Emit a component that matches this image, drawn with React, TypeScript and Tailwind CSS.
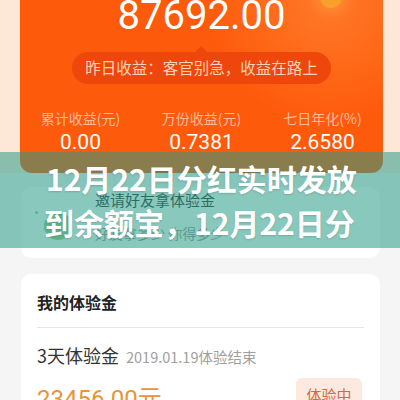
import React from "react";

const cjk = { fontFamily: '"Noto Sans CJK SC", "Noto Sans", sans-serif' };
const num = { fontFamily: 'Roboto, "Noto Sans", sans-serif' };

export default function App() {
  return (
    <div
      className="relative w-[400px] h-[400px] overflow-hidden bg-[#f5f5f5]"
      style={cjk}
    >
      {/* header */}
      <div className="bg-[#fde8d7]">
        <div className="relative ml-[20px] w-[363px] h-[173px] rounded-b-[12px] overflow-hidden bg-[#fe5a0b] bg-[radial-gradient(circle_at_85%_0%,#ff7a2a_0%,#fe5a0b_35%)]">
          <div className="absolute left-[300px] top-[-14px] w-[22px] h-[22px] rounded-full bg-[#f7a12a] shadow-[0_0_12px_6px_rgba(255,150,60,0.6)]" />
          <div
            className="mt-[-4px] text-center text-white text-[40px] leading-[40px]"
            style={num}
          >
            87692.00
          </div>
          <div className="flex justify-center mt-[16px]">
            <div className="relative h-[32px] px-[13px] rounded-full bg-[#ef460b] flex items-center text-[15.5px] text-[#fdd2bb] whitespace-nowrap">
              <div className="absolute left-1/2 -translate-x-1/2 top-[-6px] w-0 h-0 border-l-[6px] border-r-[6px] border-b-[6px] border-l-transparent border-r-transparent border-b-[#ef460b]" />
              昨日收益：客官别急，收益在路上
            </div>
          </div>
          <div className="grid grid-cols-3 mt-[24px]">
            {[
              ["累计收益(元)", "0.00"],
              ["万份收益(元)", "0.7381"],
              ["七日年化(%)", "2.6580"],
            ].map(([l, v]) => (
              <div key={l} className="flex flex-col items-center">
                <div className="text-[14px] leading-[20px] text-[#fcbc9c]">{l}</div>
                <div
                  className="mt-[2px] text-[21px] leading-[24px] text-white"
                  style={num}
                >
                  {v}
                </div>
              </div>
            ))}
          </div>
        </div>
      </div>

      {/* invite card */}
      <div className="ml-[21px] w-[359px] h-[71px] mt-[14px] rounded-[10px] bg-white relative flex items-start">
        <div className="absolute left-[14px] top-[24px] w-[3px] h-[3px] rounded-full bg-[#9ccc82]" />
        <div className="ml-[23px] mt-[25px] w-[28px] h-[28px] rounded-full bg-[#a3cf85]" />
        <div className="ml-[23px] pt-[3px] flex flex-col">
          <div className="text-[15px] leading-[20px] text-[#333]">邀请好友拿体验金</div>
          <div className="mt-[13px] text-[14px] leading-[20px] text-[#999]">好友拿多少 你得多少</div>
        </div>
      </div>

      {/* experience card */}
      <div className="ml-[21px] w-[359px] mt-[16px] rounded-[10px] bg-white px-[16px] pt-[17px] pb-[20px]">
        <div className="text-[16px] leading-[22px] font-bold text-[#222]">我的体验金</div>
        <div className="mt-[14px] h-px bg-[#e6e6e6]" />
        <div className="mt-[14px] flex items-baseline gap-[7px] whitespace-nowrap">
          <span className="text-[18px] leading-[26px] text-[#333]">3天体验金</span>
          <span className="text-[14.5px] text-[#a0a0a0]">2019.01.19体验结束</span>
        </div>
        <div className="flex items-start justify-between">
          <div
            className="mt-[13px] text-[24px] leading-[32px] text-[#e8943a]"
            style={num}
          >
            23456.00<span style={cjk}>元</span>
          </div>
          <div className="mt-[10px] mr-[2px] w-[66px] h-[34px] rounded-[6px] bg-[#fde9df] text-[#d9693b] text-[15px] flex justify-center pt-[6px]">
            体验中
          </div>
        </div>
      </div>

      {/* overlay title band */}
      <div className="absolute left-0 top-[152px] w-[400px] h-[96px] bg-[rgba(40,155,135,0.55)] px-[46px] pt-[4px]">
        <div className="text-white font-bold text-[30px] leading-[44px] whitespace-nowrap [text-shadow:0_1px_2px_rgba(0,0,0,0.15)]">
          <div>12月22日分红实时发放</div>
          <div className="ml-[-2px]">到余额宝，12月22日分</div>
        </div>
      </div>
    </div>
  );
}
